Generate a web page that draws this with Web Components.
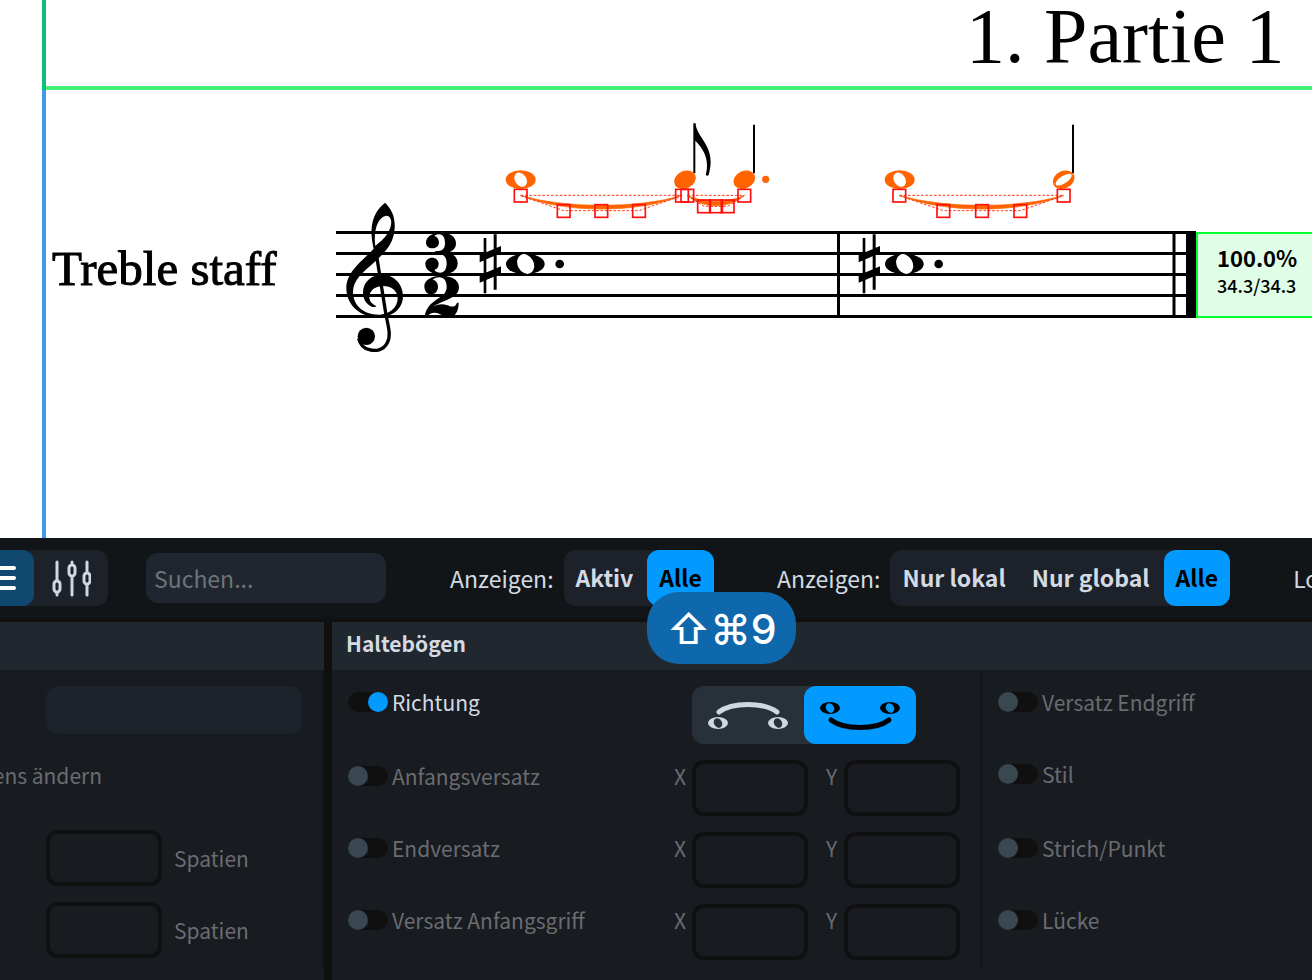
<!DOCTYPE html>
<html lang="de">
<head>
<meta charset="utf-8">
<title>Partitur – Eigenschaften</title>
<style>
html, body { margin: 0; height: 100%; background: #181b20; }
body { font-family: "Noto Sans CJK SC", "Noto Sans", sans-serif; font-size: 21px; }
</style>
</head>
<body>
<score-app></score-app>
<script>
const define = (name, html, setup) => customElements.define(name, class extends HTMLElement {
  constructor() {
    super();
    this.attachShadow({ mode: "open" }).innerHTML = html;
  }
  connectedCallback() { if (setup) setup(this, this.shadowRoot); }
});

define("score-view", `
<style>
:host { display: flex; background: #fff; overflow: hidden; min-height: 360px; }
svg.canvas { display: block; flex: 1; min-width: 0; height: auto; align-self: stretch; }
.serif { font-family: "Liberation Serif", serif; }
.ui { font-family: "Noto Sans CJK SC", sans-serif; }
</style>
<svg class="canvas" role="img" aria-label="Notenblatt">
  <defs>
    <g id="sharpnote">
      <path d="M461 144h8v166h-8zM491 133h9v166h-9zM449 195l64-27v21l-64 28zM449 256l64-27v22l-64 27z"/>
      <ellipse cx="586" cy="222" rx="58" ry="31"/>
      <ellipse cx="587" cy="222" rx="24" ry="31" fill="#fff" transform="rotate(-28 587 222)"/>
      <circle cx="689" cy="222" r="13"/>
    </g>
    <g id="cue">
      <ellipse cx="92" cy="209" rx="45" ry="28" fill="#ff6400"/>
      <ellipse cx="92" cy="209" rx="17" ry="23" fill="#fff" transform="rotate(-35 92 209)"/>
    </g>
    <rect id="grip" x="-19" y="-19" width="38" height="38" fill="none" stroke="#ff0f0a" stroke-width="5"/>
  </defs>
  <rect x="42" y="90" width="4" height="100%" fill="#4498e8"/>
  <rect x="42" y="86" width="100%" height="4" fill="#46ee7b"/>
  <rect x="42" y="0" width="4" height="90" fill="#0fbe7b"/>
  <text class="serif" x="966" y="62" font-size="78">1. Partie 1</text>
  <text class="serif" x="52" y="285" font-size="49" stroke="#000">Treble staff</text>
  <g stroke="#000" stroke-width="3">
    <path d="M336 232.500H1196M336 253.500H1196M336 274.500H1196M336 295.500H1196M336 316.500H1196M838.500 231V318M1174 231V318"/>
    <path d="M1191 231V318" stroke-width="10"/>
  </g>
  <svg x="330" y="190" width="860" height="170" viewBox="0 0 2580 510">
    <path fill-rule="evenodd" d="M131 176C120 130 118 75 165 38C185 58 196 80 194 114C192 160 165 187 137 213C98 248 69 270 69 306C69 348 104 376 150 374C180 372 203 352 203 325C203 300 180 286 155 288C132 290 117 305 118 322C119 338 130 344 139 348C138 352 130 352 125 350C108 342 99 325 99 308C99 275 125 254 155 254C195 254 219 285 219 318C219 358 185 382 145 382C90 382 49 345 49 295C49 245 95 215 131 176ZM136 168C130 130 140 82 168 77C185 76 188 100 178 120C168 143 152 154 136 168Z"/>
    <path d="M141 205L168 375C178 420 182 440 172 458C160 482 135 484 118 479C100 475 90 462 86 445" fill="none" stroke="#000" stroke-width="10"/>
    <circle cx="109" cy="439" r="26"/>
    <path d="M288 158C288 138 308 128 333 128C360 128 378 140 378 160C378 175 368 184 355 188C372 193 383 203 383 220C383 243 362 253 336 253C308 253 286 243 286 222C286 210 296 203 306 203C318 203 326 211 326 222C326 232 320 238 313 240C317 246 324 248 330 248C343 248 350 238 350 220C350 203 342 192 325 191L315 190V184L325 183C340 182 345 173 345 160C345 142 338 133 327 133C321 133 316 135 313 138C321 140 327 148 327 157C327 168 319 175 308 175C296 175 288 168 288 158Z"/>
    <path d="M283 288C283 270 305 257 335 257C368 257 387 272 387 292C387 315 365 325 345 332C330 338 318 343 310 350C325 341 340 341 352 346C367 352 376 352 381 338H386C386 362 376 382 357 382C340 382 330 368 314 368C303 368 294 374 291 382H284C286 350 310 335 330 322C345 312 350 302 350 290C350 273 342 262 328 262C320 262 312 265 308 269C318 271 324 279 324 290C324 303 315 313 303 313C290 313 283 302 283 288Z"/>
    <use href="#sharpnote"/>
    <use href="#sharpnote" x="1137"/>
  </svg>
  <svg x="490" y="110" width="620" height="120" viewBox="0 0 1860 360">
    <path d="M610 40H617C617 75 662 100 662 155C662 172 658 185 656 195Q652 200 647 195C655 165 654 130 616 92V190H610ZM789 44H795V190H789ZM1746 44H1752V190H1746Z"/>
    <g fill="#ff6400">
      <use href="#cue"/><use href="#cue" x="1137"/>
      <ellipse cx="585" cy="209" rx="34" ry="26" transform="rotate(-25 585 209)"/>
      <ellipse cx="763" cy="209" rx="34" ry="26" transform="rotate(-25 763 209)"/>
      <ellipse cx="1721" cy="209" rx="34" ry="26" transform="rotate(-25 1721 209)"/>
      <ellipse cx="1721" cy="209" rx="28" ry="11" fill="#fff" transform="rotate(-33 1721 209)"/>
      <circle cx="827" cy="208" r="11"/>
      <path d="M92 256C221 311 447 311 576 256C447 296 221 296 92 256ZM592 256C642 298 713 298 763 256C713 280 642 280 592 256ZM1228 256C1360 311 1591 311 1721 256C1591 296 1360 296 1228 256Z" stroke="#ff6400" stroke-width="2"/>
    </g>
    <path d="M92 256H576M92 257L221 302H447L576 257M592 256H763M592 257L642 289H713L763 257M1228 256H1721M1228 257L1360 302H1591L1721 257" fill="none" stroke="#ff3b1f" stroke-width="3" stroke-dasharray="8 5"/>
    <use href="#grip" x="92" y="257"/><use href="#grip" x="221" y="303"/><use href="#grip" x="334" y="303"/><use href="#grip" x="447" y="303"/>
    <use href="#grip" x="576" y="257"/><use href="#grip" x="592" y="257"/><use href="#grip" x="642" y="289"/><use href="#grip" x="678" y="289"/><use href="#grip" x="713" y="289"/><use href="#grip" x="763" y="257"/>
    <use href="#grip" x="1228" y="257"/><use href="#grip" x="1360" y="303"/><use href="#grip" x="1476" y="303"/><use href="#grip" x="1591" y="303"/><use href="#grip" x="1721" y="257"/>
  </svg>
  <rect x="1197" y="233" width="130" height="84" fill="#e0fde7" stroke="#00ff2f" stroke-width="2"/>
  <text class="ui" x="1217" y="267" font-size="22" font-weight="700">100.0%</text>
  <text class="ui" x="1217" y="293" font-size="18" font-weight="500">34.3/34.3</text>
</svg>`);

define("segment-group", `
<style>
:host { display: flex; flex: none; gap: 2px; background: #1c212a; border-radius: 12px; }
:host([tight]) { gap: 0; }
:host([tone="light"]) { background: #28313a; }
</style><slot></slot>`);

define("segment-button", `
<style>
:host { display: block; }
button { box-sizing: border-box; height: 56px; padding: 0 12px 2px; border: 0; border-radius: 12px; background: none; color: #d3dae3; font: 700 23px/54px "Noto Sans CJK SC", sans-serif; display: flex; align-items: center; justify-content: center; white-space: nowrap; }
:host([active]) button { background: #039aff; color: #000; }
:host([active="dim"]) button { background: #11486f; color: #fff; }
:host([icon]) button { width: 74px; padding: 0; }
:host([wide]) button { width: 112px; height: 58px; padding: 0; }
</style><button type="button"><slot></slot></button>`, (el, root) => {
  const b = root.querySelector("button");
  b.setAttribute("aria-pressed", el.hasAttribute("active"));
  if (el.hasAttribute("name")) b.setAttribute("aria-label", el.getAttribute("name"));
});

define("key-hint", `
<style>
:host { display: flex; align-items: center; justify-content: center; box-sizing: border-box; width: 149px; height: 72px; padding-top: 2px; border-radius: 32px; background: #0e68ab; color: #fff; font: 500 41px/70px Inter, "DejaVu Sans", sans-serif; white-space: nowrap; }
</style><slot></slot>`);

define("tool-bar", `
<style>
:host { display: flex; align-items: center; height: 80px; background: #121518; color: #d3dae3; font-size: 23px; line-height: 32px; border-bottom: 4px solid #101010; overflow: visible; }
.views { margin-left: -40px; }
input { box-sizing: border-box; flex: none; width: 240px; height: 50px; margin: 0 64px 0 38px; padding: 0 8px; border: 0; border-radius: 12px; background: #1f262f; color: #d3dae3; font: inherit; }
input::placeholder { color: #6d7479; opacity: 1; }
.filter { display: flex; align-items: center; flex: none; gap: 10px; margin-right: 63px; }
.anchor { position: relative; }
key-hint { position: absolute; left: 0; top: 42px; z-index: 2; }
.more { white-space: nowrap; overflow: hidden; flex: 1; min-width: 0; }
</style>
<segment-group class="views" tight>
  <segment-button icon active="dim" name="Liste"><svg width="40" height="28" viewBox="0 0 40 28" stroke="#fff" stroke-width="4" stroke-linecap="round"><path d="M3 4H37M3 14H37M3 24H37"/></svg></segment-button>
  <segment-button icon name="Regler"><svg width="40" height="38" viewBox="0 0 40 38" fill="none" stroke="#cfd8e1" stroke-width="3" stroke-linecap="round"><path d="M6 3V21M6 34V36M21 3V4M21 17V36M36 3V12M36 26V36"/><rect x="3" y="22" width="6" height="11" rx="3"/><rect x="18" y="6" width="6" height="11" rx="3"/><rect x="33" y="14" width="6" height="11" rx="3"/></svg></segment-button>
</segment-group>
<input type="search" placeholder="Suchen..." aria-label="Suchen">
<div class="filter"><span>Anzeigen:</span>
  <segment-group><segment-button>Aktiv</segment-button><div class="anchor"><segment-button active>Alle</segment-button><key-hint>⇧⌘9</key-hint></div></segment-group></div>
<div class="filter"><span>Anzeigen:</span>
  <segment-group><segment-button>Nur lokal</segment-button><segment-button>Nur global</segment-button><segment-button active>Alle</segment-button></segment-group></div>
<span class="more">Lo</span>`);

define("toggle-label", `
<style>
:host { display: block; }
label { display: flex; align-items: center; gap: 4px; height: 32px; line-height: 32px; color: #6a6c70; white-space: nowrap; }
:host([on]) label { color: #d3dae3; }
input { appearance: none; flex: none; margin: 0; width: 40px; height: 20px; border-radius: 10px; background: #101010; display: flex; }
input::before { content: ""; width: 20px; height: 20px; border-radius: 10px; background: #394751; }
input:checked { justify-content: flex-end; }
input:checked::before { background: #039aff; }
</style><label><input type="checkbox"><slot></slot></label>`, (el, root) => {
  root.querySelector("input").checked = el.hasAttribute("on");
});

define("number-field", `
<style>
:host { display: block; color: #6a6c70; }
label { display: flex; gap: 12px; line-height: 32px; }
input { box-sizing: border-box; width: 116px; height: 56px; border: 4px solid #101010; border-radius: 12px; background: transparent; color: #d3dae3; font: inherit; padding: 0 8px; }
:host([unit]) label { flex-direction: row-reverse; justify-content: flex-end; align-items: center; }
:host(:not([unit])) label { gap: 4px; }
:host(:not([unit])) span { width: 14px; }
</style><label><span><slot></slot></span><input type="text"></label>`);

define("property-row", `
<style>
:host { display: flex; align-items: flex-start; justify-content: space-between; }
.fields { display: flex; gap: 18px; }
</style><slot name="label"></slot><div class="fields"><slot></slot></div>`);

define("property-panel", `
<style>
:host { display: flex; flex-direction: column; min-width: 0; background: #181b20; }
h2 { box-sizing: border-box; height: 48px; margin: 0; padding: 0 14px; background: #21272e; color: #d3dae3; font-size: 21px; line-height: 42px; font-weight: 700; }
.body { display: flex; flex: 1; padding-bottom: 12px; }
</style><h2><slot name="title"></slot></h2><div class="body"><slot></slot></div>`);

const tieHead = (x, y, hole) => `<ellipse cx="${x}" cy="${y}" rx="10" ry="6"/><ellipse cx="${x}" cy="${y}" rx="4" ry="5" fill="${hole}" transform="rotate(-32 ${x} ${y})"/>`;
const axes = `<number-field>X</number-field><number-field>Y</number-field>`;
define("property-area", `
<style>
:host { display: flex; gap: 8px; background: #101010; }
.first { flex: none; width: 324px; }
.second { flex: 1; }
.col { box-sizing: border-box; border-right: 2px solid #131619; padding: 16px 16px 8px; flex: none; }
.general { width: 324px; padding: 16px 20px 8px 46px; }
select { appearance: none; display: block; box-sizing: border-box; width: 100%; height: 48px; border: 0; border-radius: 12px; background: #1d232a; }
.cut { display: flex; justify-content: flex-end; width: 102px; margin: 28px 0 42px -46px; line-height: 26px; color: #6a6c70; white-space: nowrap; overflow: hidden; }
.general number-field + number-field { margin-top: 16px; }
.ties { width: 650px; padding-right: 20px; display: grid; row-gap: 16px; align-content: start; }
.more { border: 0; flex: 1; display: grid; grid-template-rows: 56px 58px 56px 56px; row-gap: 16px; align-content: start; }
.ties segment-group { margin-right: 44px; }
</style>
<property-panel class="first">
  <div class="col general">
    <select aria-label="Auswahl"></select>
    <div class="cut">ens ändern</div>
    <number-field unit>Spatien</number-field>
    <number-field unit>Spatien</number-field>
  </div>
</property-panel>
<property-panel class="second">
  <span slot="title">Haltebögen</span>
  <div class="col ties">
    <property-row><toggle-label slot="label" on>Richtung</toggle-label>
      <segment-group tight tone="light">
        <segment-button wide name="Bogen oben"><svg width="84" height="32" viewBox="0 0 84 32" fill="#cfd8e1"><path d="M13 13C26 3 58 3 71 13" fill="none" stroke="#cfd8e1" stroke-width="5" stroke-linecap="round"/>${tieHead(12, 24, "#28313a")}${tieHead(72, 24, "#28313a")}</svg></segment-button>
        <segment-button wide active name="Bogen unten"><svg width="84" height="32" viewBox="0 0 84 32"><path d="M13 21C26 31 58 31 71 21" fill="none" stroke="#000" stroke-width="5" stroke-linecap="round"/>${tieHead(12, 9, "#039aff")}${tieHead(72, 9, "#039aff")}</svg></segment-button>
      </segment-group></property-row>
    <property-row><toggle-label slot="label">Anfangsversatz</toggle-label>${axes}</property-row>
    <property-row><toggle-label slot="label">Endversatz</toggle-label>${axes}</property-row>
    <property-row><toggle-label slot="label">Versatz Anfangsgriff</toggle-label>${axes}</property-row>
  </div>
  <div class="col more">
    <toggle-label>Versatz Endgriff</toggle-label>
    <toggle-label>Stil</toggle-label>
    <toggle-label>Strich/Punkt</toggle-label>
    <toggle-label>Lücke</toggle-label>
  </div>
</property-panel>`);

define("score-app", `
<style>
:host { display: flex; flex-direction: column; min-height: 100vh; overflow: hidden; }
score-view { flex: 1; }
tool-bar, property-area { flex: none; }
</style>
<score-view></score-view>
<tool-bar></tool-bar>
<property-area></property-area>`);
</script>
</body>
</html>
